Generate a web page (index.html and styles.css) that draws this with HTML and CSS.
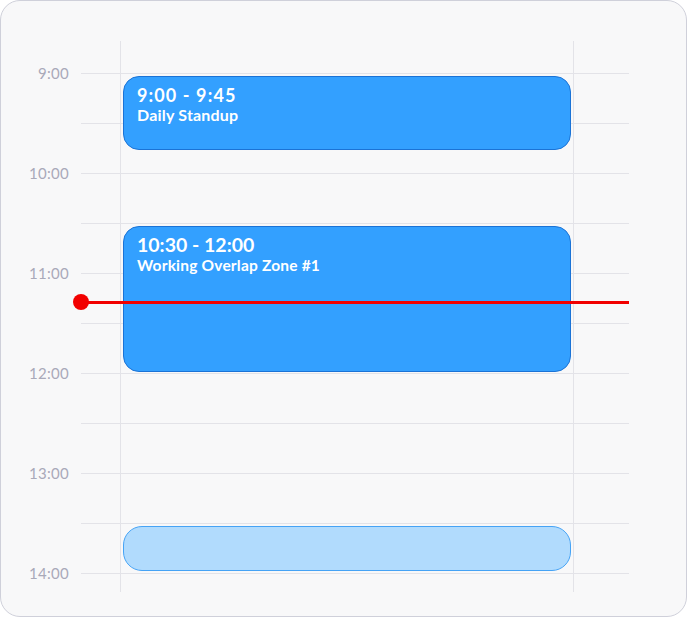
FILE: index.html
```html
<!DOCTYPE html>
<html lang="en">
<head>
    <meta charset="UTF-8">
    <title>Day Schedule</title>
    <link rel="stylesheet" href="styles.css">
</head>
<body>
    <div class="card">
        <div class="timeline">
            <div class="rules">
                <div class="row"><span class="hour">9:00</span><span class="rule"></span></div>
                <div class="row"><span class="hour"></span><span class="rule"></span></div>
                <div class="row"><span class="hour">10:00</span><span class="rule"></span></div>
                <div class="row"><span class="hour"></span><span class="rule"></span></div>
                <div class="row"><span class="hour">11:00</span><span class="rule"></span></div>
                <div class="row"><span class="hour"></span><span class="rule"></span></div>
                <div class="row"><span class="hour">12:00</span><span class="rule"></span></div>
                <div class="row"><span class="hour"></span><span class="rule"></span></div>
                <div class="row"><span class="hour">13:00</span><span class="rule"></span></div>
                <div class="row"><span class="hour"></span><span class="rule"></span></div>
                <div class="row"><span class="hour">14:00</span><span class="rule"></span></div>
            </div>

            <div class="column"></div>

            <!-- events sit on the time axis: top/height come from start/end times -->
            <div class="day">
                <div class="event" style="top: 35px; height: 74px;">
                    <div class="event-time">9:00 - 9:45</div>
                    <div class="event-title">Daily Standup</div>
                </div>
                <div class="event event-long" style="top: 185px; height: 146px;">
                    <div class="event-time">10:30 - 12:00</div>
                    <div class="event-title">Working Overlap Zone #1</div>
                </div>
                <div class="event event-draft" style="top: 485px; height: 45px;"></div>

                <div class="now" style="top: 260px;"><span class="now-dot"></span></div>
            </div>
        </div>
    </div>
</body>
</html>
```

FILE: styles.css
```css
body {
    margin: 0;
    background-color: #ffffff;
    font-family: 'Lato', 'Liberation Sans', sans-serif;
}

.card {
    box-sizing: border-box;
    width: 687px;
    height: 617px;
    padding-top: 40px;
    background-color: #f8f8f9;
    border: 1px solid #cfd0da;
    border-radius: 20px;
    overflow: hidden;
}

.timeline {
    display: grid;
    width: 628px;
}

.rules,
.column,
.day {
    grid-area: 1 / 1;
}

.rules {
    padding-top: 7px;
}

.row {
    display: flex;
    align-items: center;
    height: 50px;
}

.hour {
    width: 68px;
    padding-right: 12px;
    text-align: right;
    font-size: 15px;
    letter-spacing: 0.3px;
    color: #a9a9b9;
}

.rule {
    flex: 1;
    height: 1px;
    background-color: #e3e3e8;
}

.column {
    box-sizing: border-box;
    margin-left: 119px;
    width: 454px;
    height: 551px;
    border-left: 1px solid #e3e3e8;
    border-right: 1px solid #e3e3e8;
}

.day {
    position: relative;
}

.event {
    position: absolute;
    left: 122px;
    width: 448px;
    box-sizing: border-box;
    padding: 8px 13px;
    background-color: #33a0ff;
    border: 1px solid #1b73d6;
    border-radius: 16px;
    color: #ffffff;
}

.event-time {
    font-size: 18px;
    font-weight: 700;
    line-height: 21px;
    letter-spacing: 1.1px;
}

.event-title {
    font-size: 16px;
    font-weight: 700;
    line-height: 18px;
    letter-spacing: 0.2px;
}

.event-long .event-time {
    font-size: 19.5px;
    line-height: 20px;
    letter-spacing: 0;
}

.event-long .event-title {
    margin-top: 1px;
    font-size: 15.5px;
}

.event-draft {
    padding: 0;
    background-color: #b1dbfd;
    border-color: #46a3f5;
    border-radius: 19px;
}

.now {
    position: absolute;
    left: 80px;
    width: 548px;
    height: 3px;
    background-color: #f20000;
}

.now-dot {
    position: absolute;
    left: -8px;
    top: -7px;
    width: 16px;
    height: 16px;
    border-radius: 50%;
    background-color: #f20000;
}
```
